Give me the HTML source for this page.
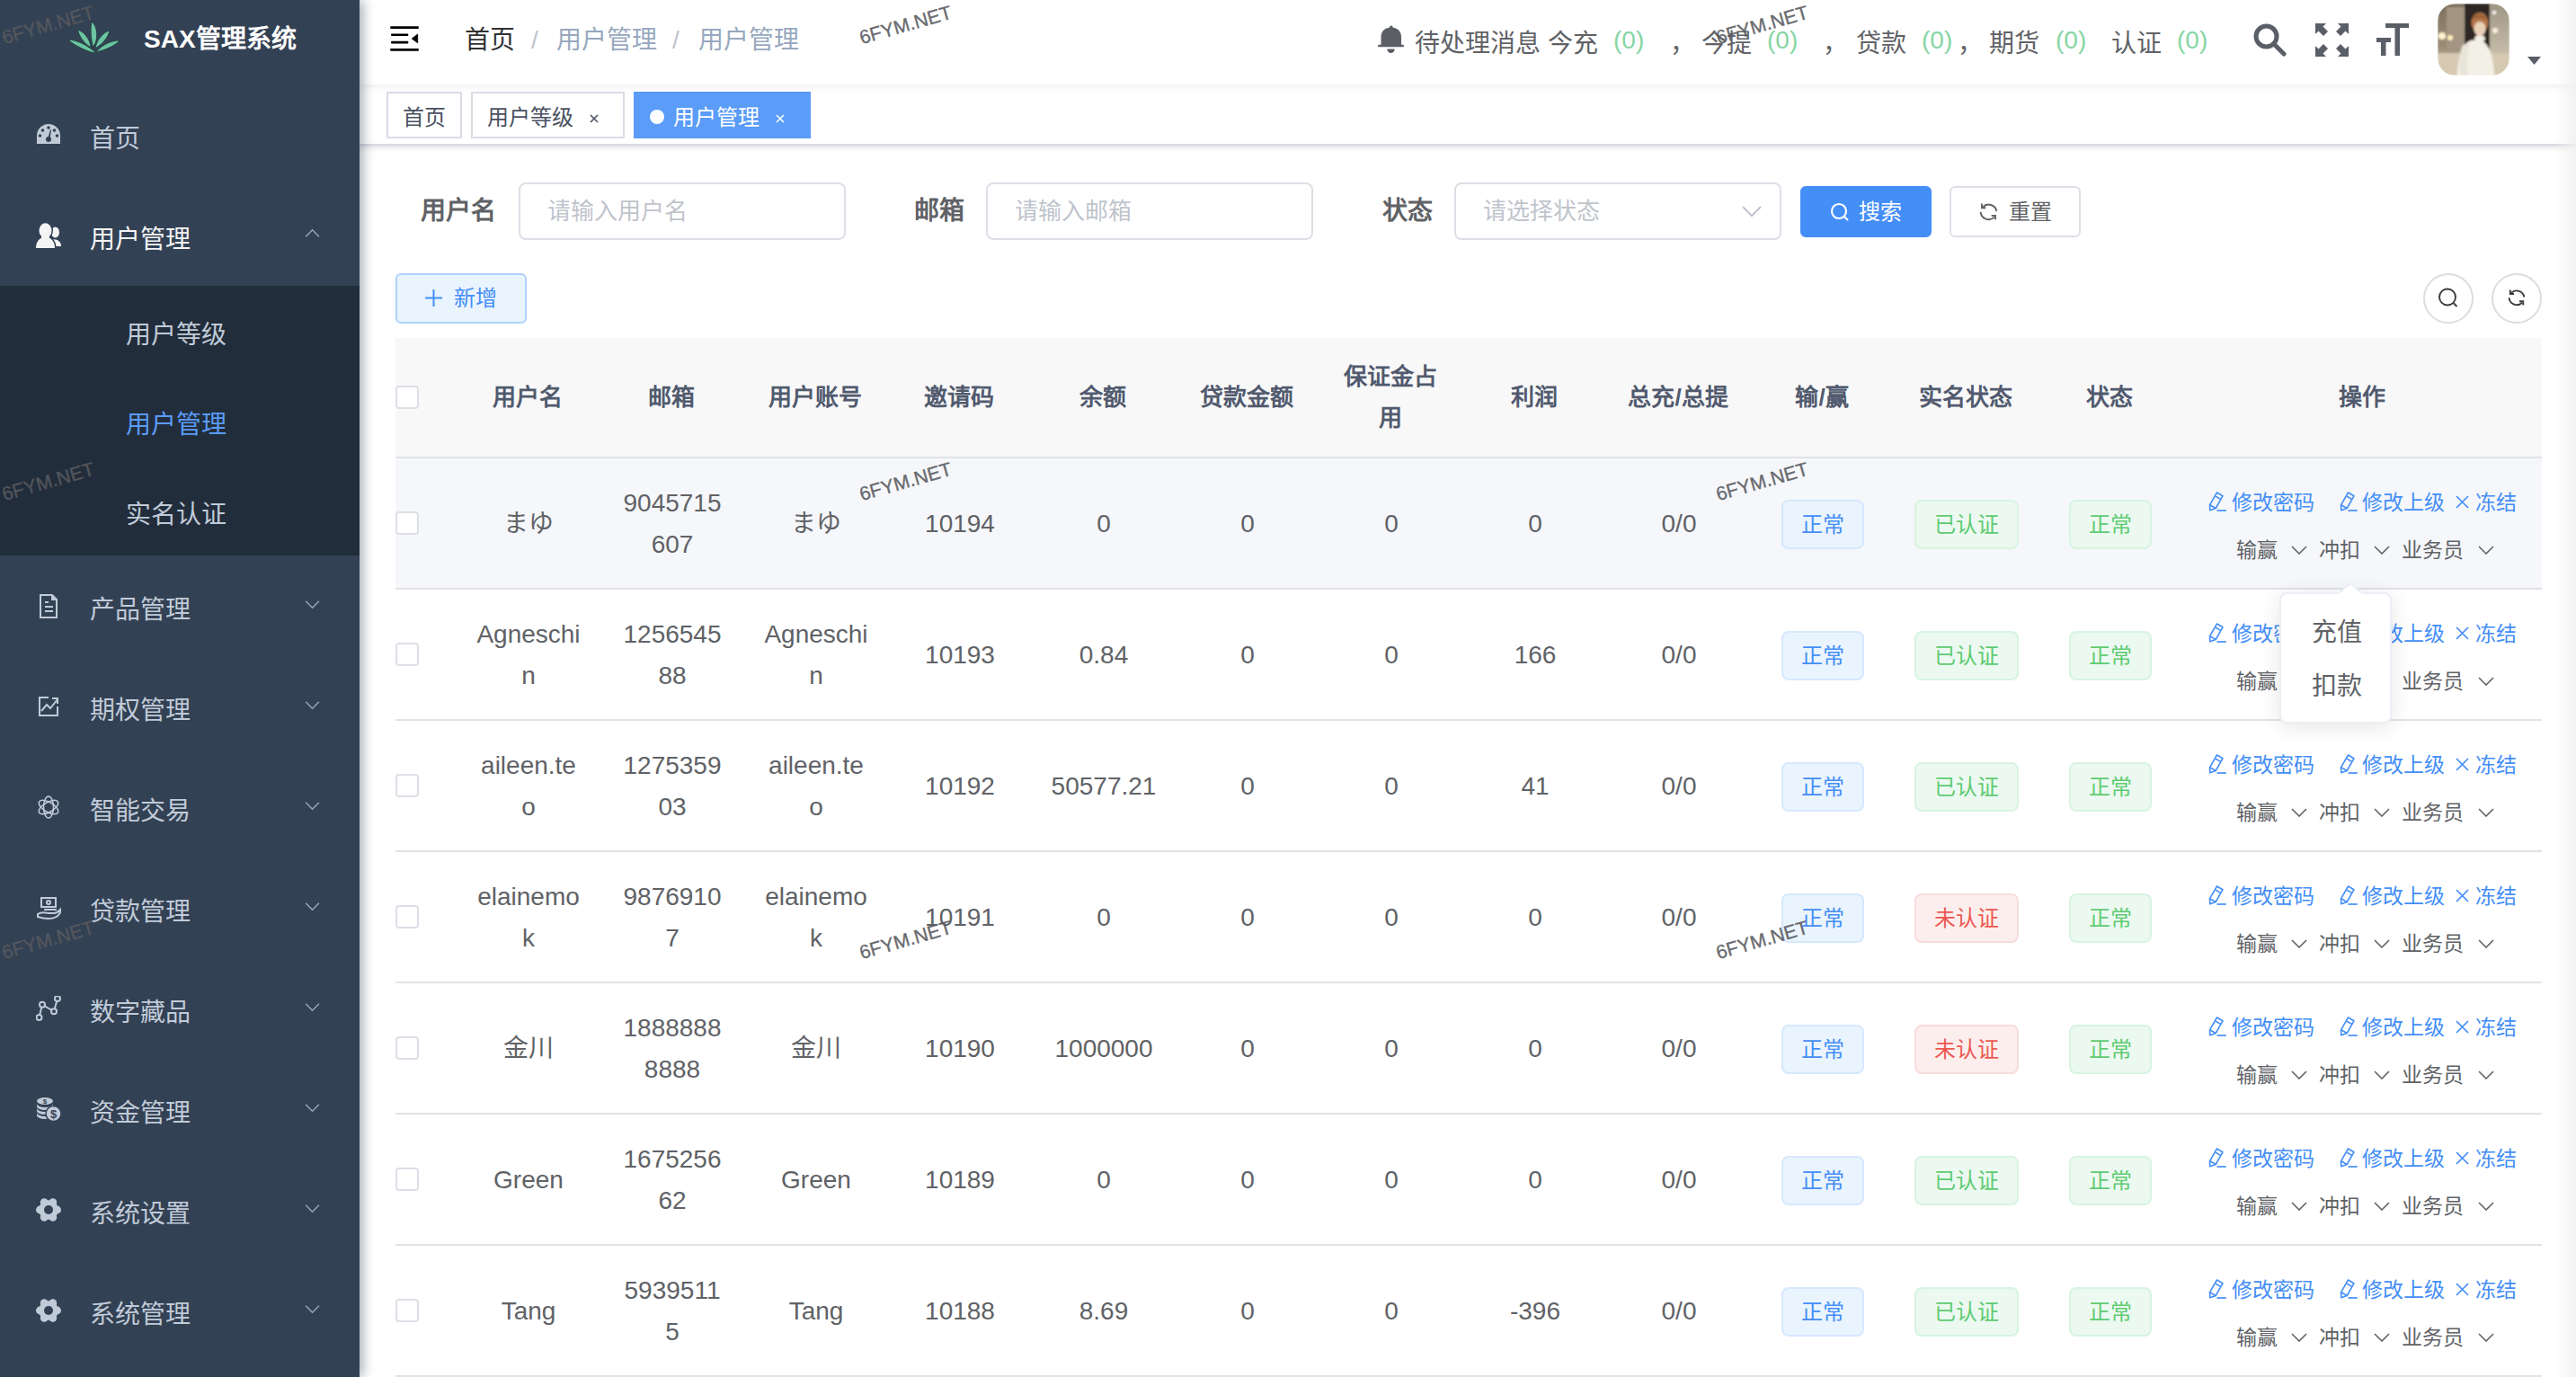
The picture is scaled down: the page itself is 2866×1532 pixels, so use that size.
<!DOCTYPE html><html lang="zh-CN"><head><meta charset="utf-8"><style>
*{box-sizing:border-box;margin:0;padding:0}
html,body{width:2866px;height:1532px;overflow:hidden;background:#fff;font-family:"Liberation Sans", sans-serif;}
.abs{position:absolute}
.t{position:absolute;white-space:nowrap;line-height:1}
#sb{position:absolute;left:0;top:0;width:400px;height:1532px;background:#334154;z-index:3;box-shadow:4px 0 12px rgba(0,21,41,.35)}
#nav{position:absolute;left:400px;top:0;width:2466px;height:94px;background:#fff;box-shadow:0 2px 8px rgba(0,21,41,.08);z-index:2}
#tags{position:absolute;left:400px;top:94px;width:2466px;height:68px;background:#fff;border-bottom:2px solid #d9dce4;box-shadow:0 2px 6px 0 rgba(0,0,0,.12),0 0 6px 0 rgba(0,0,0,.04);z-index:1}
.tag{position:absolute;top:8px;height:52px;border:2px solid #d8dce5;color:#495060;background:#fff;font-size:24px;line-height:54px;padding:0 16px}
.tag.act{background:#5a9cf8;border-color:#5a9cf8;color:#fff}
.mi{position:absolute;left:0;width:400px;height:112px;color:#c1cbd8;font-size:28px}
.mi .ic{position:absolute;left:40px;top:42px;width:28px;height:28px}
.mi .tx{position:absolute;left:100px;top:5px;line-height:112px}
.mi .ar{position:absolute;left:340px;top:50px;width:18px;height:12px}
.si{position:absolute;left:0;width:400px;height:100px;color:#c1cbd8;font-size:28px;line-height:100px;padding-left:140px;padding-top:5px}
.lbl{position:absolute;font-size:28px;font-weight:bold;color:#606266;line-height:62px;top:204px}
.inp{position:absolute;top:203px;height:64px;width:364px;border:2px solid #dcdfe6;border-radius:8px;background:#fff;color:#c0c4cc;font-size:26px;line-height:60px;padding-left:30px}
.btn{position:absolute;top:207px;height:57px;width:146px;border-radius:6px;font-size:24px;line-height:53px;text-align:center}
th,td{padding:0;text-align:center;vertical-align:middle}
#tbl{position:absolute;left:440px;top:376px;width:2388px;border-collapse:collapse;table-layout:fixed}
#tbl th{background:#f8f8f9;color:#515a6e;font-size:26px;font-weight:bold;height:133px;line-height:46px;border-bottom:2px solid #e2e3e6}
#tbl td{color:#606266;font-size:28px;height:146px;line-height:46px;border-bottom:2px solid #e2e3e6;padding:2px 0 0 2px}
#tbl tr.hv td{background:#f5f7fa}
.cb{display:block;width:26px;height:26px;border:2px solid #dcdfe6;border-radius:4px;background:#fff;margin-left:0}
.tg{display:inline-block;height:55px;line-height:51px;padding:0 20px;font-size:24px;border:2px solid;border-radius:8px;vertical-align:middle}
.tb{background:#eaf4fe;border-color:#d6e8fd;color:#448ef7}
.tgn{background:#ebf9f1;border-color:#d7f4e1;color:#5fcb71}
.tr{background:#fceeed;border-color:#f9dcdc;color:#eb5851}
.ops{position:relative;height:146px}
.wm{position:absolute;font-size:21.4px;font-weight:normal;color:rgba(88,90,94,.88);-webkit-text-stroke:0.4px rgba(88,90,94,.88);transform:rotate(-16deg);transform-origin:0 0;white-space:nowrap;z-index:20;line-height:1}
</style></head><body><div id="sb">
<svg class="abs" style="left:66px;top:16px" width="80" height="52" viewBox="0 0 80 52"><g fill="#6cc4a0" stroke="#1b3a3a" stroke-width="0.8"><path d="M37.7 36.5 C44.0 27.6 42.6 13.5 36.2 8.1 C34.3 13.9 34.9 28.1 37.7 36.5Z"/><path d="M35.0 36.5 C34.5 27.9 27.0 18.6 20.8 17.2 C21.0 23.0 27.8 32.9 35.0 36.5Z"/><path d="M40.0 37.7 C47.6 34.1 55.2 24.1 55.8 18.1 C49.3 19.4 41.1 28.9 40.0 37.7Z"/><path d="M40.8 43.4 C33.4 35.0 17.8 27.8 10.0 28.1 C15.0 33.6 30.2 41.5 40.8 43.4Z"/><path d="M41.1 41.5 C50.2 40.5 63.0 34.1 67.0 29.2 C60.2 28.2 47.1 34.0 41.1 41.5Z"/></g></svg>
<div class="t" style="left:160px;top:29px;font-size:28px;font-weight:bold;color:#fff;line-height:30px">SAX管理系统</div>
<div class="mi" style="top:94px;color:#c1cbd8"><div class="ic"><svg viewBox="0 0 28 24" width="28" height="24"><path d="M14 1 A13 13 0 0 0 1 14 V23 H27 V14 A13 13 0 0 0 14 1Z" fill="#c1cbd8"/><g fill="#334154"><circle cx="14" cy="5" r="1.8"/><circle cx="7.5" cy="8" r="1.8"/><circle cx="20.5" cy="8" r="1.8"/><circle cx="4.5" cy="14" r="1.8"/><circle cx="23.5" cy="14" r="1.8"/><circle cx="14" cy="18" r="3"/><path d="M13 18 L16 7 L17 7.5 L15.5 18Z"/></g></svg></div><div class="tx">首页</div></div>
<div class="mi" style="top:206px;color:#f4f4f5"><div class="ic"><svg viewBox="0 0 28 28" width="28" height="28"><g fill="#f4f4f5"><ellipse cx="21.5" cy="10.5" rx="4.5" ry="6"/><path d="M17 18.5 C24 17.5 28 21 28 26 H20Z"/></g><g fill="#334154" stroke="#334154" stroke-width="3"><ellipse cx="10.5" cy="8.5" rx="7" ry="8.3"/><rect x="6" y="12" width="9" height="6"/><path d="M0 28 C0 20.5 4 16 10.5 16 C17 16 21 20.5 21 28Z"/></g><g fill="#f4f4f5"><ellipse cx="10.5" cy="8.5" rx="7" ry="8.3"/><rect x="6" y="12" width="9" height="6"/><path d="M0 28 C0 20.5 4 16 10.5 16 C17 16 21 20.5 21 28Z"/></g></svg></div><div class="tx">用户管理</div><svg class="ar" style="top:47px;left:339px" viewBox="0 0 19 13" width="19" height="13"><path d="M1 11 L9 3 L17 11" stroke="#98a6bb" stroke-width="1.6" fill="none"/></svg></div>
<div class="abs" style="left:0;top:318px;width:400px;height:300px;background:#222d3c"></div>
<div class="si" style="top:318px;color:#c1cbd8">用户等级</div>
<div class="si" style="top:418px;color:#5a9cf8">用户管理</div>
<div class="si" style="top:518px;color:#c1cbd8">实名认证</div>
<div class="mi" style="top:618px"><div class="ic"><svg viewBox="0 0 28 28" width="28" height="28" fill="none" stroke="#c1cbd8" stroke-width="2"><path d="M5 2 H18 L23 7 V27 H5Z"/><path d="M18 2 V7 H23" fill="#c1cbd8"/><path d="M10 10 H14 M10 15 H19 M10 20 H19" stroke-width="2"/></svg></div><div class="tx">产品管理</div><svg class="ar" style="top:49px;left:339px" viewBox="0 0 19 13" width="19" height="13"><path d="M1 2 L9 10 L17 2" stroke="#98a6bb" stroke-width="1.6" fill="none"/></svg></div>
<div class="mi" style="top:730px"><div class="ic"><svg viewBox="0 0 28 28" width="28" height="28" fill="none" stroke="#c1cbd8" stroke-width="2"><path d="M14 4 H4 V24 H24 V14"/><path d="M6 19 L12 12 L16 16 L24 6"/><path d="M18 5 H24 V11"/></svg></div><div class="tx">期权管理</div><svg class="ar" style="top:49px;left:339px" viewBox="0 0 19 13" width="19" height="13"><path d="M1 2 L9 10 L17 2" stroke="#98a6bb" stroke-width="1.6" fill="none"/></svg></div>
<div class="mi" style="top:842px"><div class="ic"><svg viewBox="0 0 28 28" width="28" height="28" fill="none" stroke="#c1cbd8" stroke-width="1.5"><ellipse cx="14" cy="14" rx="5.5" ry="12"/><ellipse cx="14" cy="14" rx="5.5" ry="12" transform="rotate(60 14 14)"/><ellipse cx="14" cy="14" rx="5.5" ry="12" transform="rotate(-60 14 14)"/></svg></div><div class="tx">智能交易</div><svg class="ar" style="top:49px;left:339px" viewBox="0 0 19 13" width="19" height="13"><path d="M1 2 L9 10 L17 2" stroke="#98a6bb" stroke-width="1.6" fill="none"/></svg></div>
<div class="mi" style="top:954px"><div class="ic"><svg viewBox="0 0 28 28" width="28" height="28" fill="none" stroke="#c1cbd8" stroke-width="2"><path d="M6 3 H22 V13 H6Z"/><circle cx="14" cy="8" r="2"/><path d="M9 16 H23"/><path d="M2 21 C6 18 10 19 14 20 H20 C24 20 26 17 27 16 V19 C25 24 20 26 14 26 C9 26 5 25 2 24Z"/></svg></div><div class="tx">贷款管理</div><svg class="ar" style="top:49px;left:339px" viewBox="0 0 19 13" width="19" height="13"><path d="M1 2 L9 10 L17 2" stroke="#98a6bb" stroke-width="1.6" fill="none"/></svg></div>
<div class="mi" style="top:1066px"><div class="ic"><svg viewBox="0 0 28 28" width="28" height="28" fill="none" stroke="#c1cbd8" stroke-width="2"><path d="M3.5 24 L7 9.7 L20 17.3 L24 3"/><circle cx="3.5" cy="24" r="3" fill="#334154"/><circle cx="7" cy="9.7" r="3" fill="#334154"/><circle cx="20" cy="17.3" r="3" fill="#334154"/><circle cx="24" cy="3" r="3" fill="#334154"/></svg></div><div class="tx">数字藏品</div><svg class="ar" style="top:49px;left:339px" viewBox="0 0 19 13" width="19" height="13"><path d="M1 2 L9 10 L17 2" stroke="#98a6bb" stroke-width="1.6" fill="none"/></svg></div>
<div class="mi" style="top:1178px"><div class="ic"><svg viewBox="0 0 28 28" width="28" height="28"><g fill="#c1cbd8"><ellipse cx="10" cy="5" rx="9" ry="4"/><path d="M1 8 a9 4 0 0 0 18 0 v3 a9 4 0 0 1 -18 0Z"/><path d="M1 13 a9 4 0 0 0 18 0 v3 a9 4 0 0 1 -18 0Z"/><path d="M1 18 a9 4 0 0 0 18 0 v3 a9 4 0 0 1 -18 0Z"/><circle cx="19.5" cy="19" r="8.5" stroke="#334154" stroke-width="1.5"/></g><text x="19.5" y="24" font-size="13" font-weight="bold" text-anchor="middle" fill="#334154" font-family="Liberation Sans">$</text><text x="10" y="8" font-size="8" font-weight="bold" text-anchor="middle" fill="#334154" font-family="Liberation Sans">$</text></svg></div><div class="tx">资金管理</div><svg class="ar" style="top:49px;left:339px" viewBox="0 0 19 13" width="19" height="13"><path d="M1 2 L9 10 L17 2" stroke="#98a6bb" stroke-width="1.6" fill="none"/></svg></div>
<div class="mi" style="top:1290px"><div class="ic"><svg viewBox="0 0 28 28" width="28" height="28"><g fill="#c1cbd8"><circle cx="14" cy="14" r="10.8"/><circle cx="23.60" cy="14.00" r="4.4"/><circle cx="18.80" cy="22.31" r="4.4"/><circle cx="9.20" cy="22.31" r="4.4"/><circle cx="4.40" cy="14.00" r="4.4"/><circle cx="9.20" cy="5.69" r="4.4"/><circle cx="18.80" cy="5.69" r="4.4"/></g><circle cx="14" cy="14" r="5" fill="#334154"/></svg></div><div class="tx">系统设置</div><svg class="ar" style="top:49px;left:339px" viewBox="0 0 19 13" width="19" height="13"><path d="M1 2 L9 10 L17 2" stroke="#98a6bb" stroke-width="1.6" fill="none"/></svg></div>
<div class="mi" style="top:1402px"><div class="ic"><svg viewBox="0 0 28 28" width="28" height="28"><g fill="#c1cbd8"><circle cx="14" cy="14" r="10.8"/><circle cx="23.60" cy="14.00" r="4.4"/><circle cx="18.80" cy="22.31" r="4.4"/><circle cx="9.20" cy="22.31" r="4.4"/><circle cx="4.40" cy="14.00" r="4.4"/><circle cx="9.20" cy="5.69" r="4.4"/><circle cx="18.80" cy="5.69" r="4.4"/></g><circle cx="14" cy="14" r="5" fill="#334154"/></svg></div><div class="tx">系统管理</div><svg class="ar" style="top:49px;left:339px" viewBox="0 0 19 13" width="19" height="13"><path d="M1 2 L9 10 L17 2" stroke="#98a6bb" stroke-width="1.6" fill="none"/></svg></div>
</div>
<div id="nav">
<svg class="abs" style="left:34px;top:29px" width="32" height="28" viewBox="0 0 32 28"><g fill="#000"><rect x="0.2" y="0.2" width="31.6" height="2.7" rx="0.6"/><rect x="1" y="8.4" width="19.3" height="2.7" rx="1"/><rect x="1" y="16.8" width="19.3" height="2.7" rx="1"/><rect x="0.2" y="25" width="31.6" height="2.7" rx="0.6"/><path d="M24.2 14 L30.7 9 L30.7 18.8Z" stroke="#000" stroke-width="0.8" stroke-linejoin="round"/></g></svg>
<div class="t" style="left:117px;top:30px;font-size:28px;line-height:30px;color:#303133">首页</div>
<div class="t" style="left:191px;top:30px;font-size:28px;line-height:30px;color:#c0c4cc">/</div>
<div class="t" style="left:219px;top:30px;font-size:28px;line-height:30px;color:#97a8be">用户管理</div>
<div class="t" style="left:348px;top:30px;font-size:28px;line-height:30px;color:#c0c4cc">/</div>
<div class="t" style="left:377px;top:30px;font-size:28px;line-height:30px;color:#97a8be">用户管理</div>
<svg class="abs" style="left:1132px;top:28px" width="32" height="32" viewBox="0 0 32 32"><g fill="#5b5e65"><circle cx="15.8" cy="2.4" r="1.9"/><path d="M4.5 22.5 V13 C4.5 6.5 9.5 2.6 15.8 2.6 C22 2.6 27 6.5 27 13 V22.5Z"/><rect x="1" y="21.8" width="29" height="2.5" rx="1.2"/><path d="M11.3 26.6 H19.7 A4.2 4.4 0 0 1 11.3 26.6Z"/></g></svg>
<div class="t" style="left:1174px;top:34px;font-size:28px;line-height:30px;color:#606266;">待处理消息</div>
<div class="t" style="left:1322px;top:34px;font-size:28px;line-height:30px;color:#606266;">今充</div>
<div class="t" style="left:1395px;top:30px;font-size:28px;line-height:30px;color:#86d6a4;">(0)</div>
<div class="t" style="left:1458px;top:34px;font-size:28px;line-height:30px;color:#606266;">，</div>
<div class="t" style="left:1493px;top:34px;font-size:28px;line-height:30px;color:#606266;">今提</div>
<div class="t" style="left:1566px;top:30px;font-size:28px;line-height:30px;color:#86d6a4;">(0)</div>
<div class="t" style="left:1628px;top:34px;font-size:28px;line-height:30px;color:#606266;">，</div>
<div class="t" style="left:1665px;top:34px;font-size:28px;line-height:30px;color:#606266;">贷款</div>
<div class="t" style="left:1738px;top:30px;font-size:28px;line-height:30px;color:#86d6a4;">(0)</div>
<div class="t" style="left:1778px;top:34px;font-size:28px;line-height:30px;color:#606266;">，</div>
<div class="t" style="left:1813px;top:34px;font-size:28px;line-height:30px;color:#606266;">期货</div>
<div class="t" style="left:1887px;top:30px;font-size:28px;line-height:30px;color:#86d6a4;">(0)</div>
<div class="t" style="left:1949px;top:34px;font-size:28px;line-height:30px;color:#606266;">认证</div>
<div class="t" style="left:2022px;top:30px;font-size:28px;line-height:30px;color:#86d6a4;">(0)</div>
<svg class="abs" style="left:2107px;top:26px" width="37" height="37" viewBox="0 0 37 37"><circle cx="14.5" cy="14.5" r="11.5" stroke="#5a5e66" stroke-width="5" fill="none"/><path d="M23 23 L34 34" stroke="#5a5e66" stroke-width="5" stroke-linecap="round"/></svg>
<svg class="abs" style="left:2176px;top:26px" width="37" height="37" viewBox="0 0 37 37"><g fill="#5a5e66"><path d="M0 0 H12 L8.5 3.5 L14 9 L9 14 L3.5 8.5 L0 12Z"/><path d="M37 0 H25 L28.5 3.5 L23 9 L28 14 L33.5 8.5 L37 12Z"/><path d="M0 37 H12 L8.5 33.5 L14 28 L9 23 L3.5 28.5 L0 25Z"/><path d="M37 37 H25 L28.5 33.5 L23 28 L28 23 L33.5 28.5 L37 25Z"/></g></svg>
<svg class="abs" style="left:2244px;top:26px" width="37" height="37" viewBox="0 0 37 37"><g fill="#5a5e66"><rect x="10" y="0" width="26" height="5"/><rect x="20.5" y="0" width="5.5" height="36"/><rect x="0" y="16" width="16" height="5"/><rect x="5" y="16" width="5.5" height="20"/></g></svg>
<svg class="abs" style="left:2312px;top:4px" width="80" height="80" viewBox="0 0 80 80"><defs><clipPath id="av"><rect width="80" height="80" rx="20"/></clipPath>
<linearGradient id="avL" x1="0" y1="0" x2="0" y2="1"><stop offset="0" stop-color="#7d7060"/><stop offset=".6" stop-color="#9b8c76"/><stop offset="1" stop-color="#d9ccb6"/></linearGradient>
<linearGradient id="avR" x1="0" y1="0" x2="0" y2="1"><stop offset="0" stop-color="#a09684"/><stop offset="1" stop-color="#cfc5b2"/></linearGradient>
<filter id="avb"><feGaussianBlur stdDeviation="1.2"/></filter></defs>
<g clip-path="url(#av)"><g filter="url(#avb)"><rect width="80" height="80" fill="url(#avL)"/>
<rect x="10" y="4" width="20" height="50" fill="#a39582"/><rect x="30" y="0" width="30" height="50" fill="#2e2722"/><rect x="58" y="0" width="22" height="70" fill="url(#avR)"/>
<circle cx="63" cy="10" r="2" fill="#fff"/><circle cx="5" cy="36" r="4" fill="#fff4d0"/><circle cx="14" cy="38" r="3" fill="#ffeebb"/><circle cx="64" cy="30" r="3" fill="#f7f0dc"/>
<rect x="0" y="55" width="80" height="25" fill="#d6c9b2"/>
<path d="M22 80 C22 58 28 44 37 41 L46 40 C56 42 62 56 63 80Z" fill="#f3f0e6"/>
<path d="M28 46 C22 60 24 72 26 80 L34 80 C32 66 34 54 36 44Z" fill="#e8e4d8"/>
<ellipse cx="47" cy="21" rx="9.5" ry="11" fill="#b27648"/><ellipse cx="47" cy="28" rx="6.5" ry="8" fill="#ead0b8"/><path d="M38 18 C40 10 54 10 56 19 C52 15 44 15 38 18Z" fill="#9a5f36"/>
<ellipse cx="47" cy="39" rx="6" ry="4" fill="#f4efe4"/>
</g></g></svg>
<svg class="abs" style="left:2412px;top:63px" width="15" height="9" viewBox="0 0 15 9"><path d="M0 0 H15 L7.5 9Z" fill="#5a5e66"/></svg>
</div>
<div id="tags">
<div class="tag" style="left:30px;width:84px">首页</div>
<div class="tag" style="left:124px;width:171px">用户等级<svg class="abs" style="left:130px;top:23px" width="10" height="10" viewBox="0 0 10 10"><path d="M1 1 L9 9 M9 1 L1 9" stroke="#495060" stroke-width="1.6"/></svg></div>
<div class="tag act" style="left:305px;width:197px"><span style="display:inline-block;width:16px;height:16px;border-radius:50%;background:#fff;vertical-align:middle;position:relative;top:-3px;margin-right:10px"></span>用户管理<svg class="abs" style="left:156px;top:23px" width="10" height="10" viewBox="0 0 10 10"><path d="M1 1 L9 9 M9 1 L1 9" stroke="#fff" stroke-width="1.6"/></svg></div>
</div>
<div class="lbl" style="left:468px">用户名</div>
<div class="inp" style="left:577px">请输入用户名</div>
<div class="lbl" style="left:1017px">邮箱</div>
<div class="inp" style="left:1097px">请输入邮箱</div>
<div class="lbl" style="left:1538px">状态</div>
<div class="inp" style="left:1618px">请选择状态<svg class="abs" style="left:318px;top:24px" width="22" height="13" viewBox="0 0 22 13"><path d="M1 1 L11 11 L21 1" stroke="#c0c4cc" stroke-width="2" fill="none"/></svg></div>
<div class="btn" style="left:2003px;background:#448ef7;color:#fff;border:2px solid #448ef7"><svg style="vertical-align:middle;position:relative;top:-2px;margin-right:10px" width="22" height="22" viewBox="0 0 22 22"><circle cx="10" cy="10" r="8" stroke="#fff" stroke-width="2.2" fill="none"/><path d="M15.5 15.5 L20 20" stroke="#fff" stroke-width="2.2"/></svg>搜索</div>
<div class="btn" style="left:2169px;background:#fff;color:#606266;border:2px solid #dcdfe6"><svg style="vertical-align:middle;position:relative;top:-2px;margin-right:12px" width="21" height="21" viewBox="5 5 20 20" fill="none" stroke="#606266" stroke-width="1.8"><path d="M8.8 10.2 A8.5 8.5 0 0 1 23.4 14.5"/><path d="M7.8 6.5 V11 H12"/><path d="M6.6 15.3 A8.5 8.5 0 0 0 21 20.8"/><path d="M18 19.2 H22.2 V23.4"/></svg>重置</div>
<div class="btn" style="left:440px;top:304px;width:146px;height:56px;background:#eaf4fe;color:#448ef7;border:2px solid #add2fb;line-height:52px"><svg style="vertical-align:middle;position:relative;top:-2px;margin-right:13px" width="19" height="19" viewBox="0 0 19 19"><path d="M9.5 0 V19 M0 9.5 H19" stroke="#448ef7" stroke-width="2"/></svg>新增</div>
<div class="abs" style="left:2696px;top:304px;width:56px;height:56px;border:2px solid #dcdde0;border-radius:50%"><svg class="abs" style="left:14px;top:13px" width="26" height="26" viewBox="0 0 26 26"><circle cx="11" cy="11.5" r="9" stroke="#3a3b3d" stroke-width="1.9" fill="none"/><path d="M17.5 18 L21.5 22" stroke="#3a3b3d" stroke-width="1.9"/></svg></div>
<div class="abs" style="left:2772px;top:304px;width:56px;height:56px;border:2px solid #dcdde0;border-radius:50%"><svg class="abs" style="left:11px;top:10px" width="30" height="30" viewBox="0 0 30 30" fill="none" stroke="#3a3b3d" stroke-width="1.9"><path d="M8.8 10.2 A8.5 8.5 0 0 1 23.4 14.5"/><path d="M7.8 6.5 V11 H12"/><path d="M6.6 15.3 A8.5 8.5 0 0 0 21 20.8"/><path d="M18 19.2 H22.2 V23.4"/></svg></div>
<table id="tbl"><colgroup><col style="width:67px"><col style="width:160px"><col style="width:160px"><col style="width:160px"><col style="width:160px"><col style="width:160px"><col style="width:160px"><col style="width:160px"><col style="width:160px"><col style="width:160px"><col style="width:160px"><col style="width:160px"><col style="width:160px"><col style="width:401px"></colgroup>
<tr><th><span class=cb></span></th><th>用户名</th><th>邮箱</th><th>用户账号</th><th>邀请码</th><th>余额</th><th>贷款金额</th><th>保证金占<br>用</th><th>利润</th><th>总充/总提</th><th>输/赢</th><th>实名状态</th><th>状态</th><th>操作</th></tr>
<tr class="hv"><td style="text-align:left;padding:0"><span class="cb"></span></td><td>まゆ</td><td>9045715<br>607</td><td>まゆ</td><td>10194</td><td>0</td><td>0</td><td>0</td><td>0</td><td>0/0</td><td><span class="tg tb">正常</span></td><td><span class="tg tgn">已认证</span></td><td><span class="tg tgn">正常</span></td><td style="text-align:left;vertical-align:top;padding:0"><div style="position:relative;width:401px;height:144px"><svg style="position:absolute;left:30px;top:37px" width="22" height="23" viewBox="0 0 22 23" fill="none" stroke="#448ef7" stroke-width="1.6" stroke-linejoin="round"><path d="M9.5 1 L15.9 4.8 L8.2 18.5 L1.8 20.8 L1.5 14.8Z"/><path d="M8.2 5.2 L13.7 8.4"/><path d="M1.6 14.8 L8.2 18.5"/><path d="M9.5 21 H19.8" stroke-width="1.7"/></svg><div style="position:absolute;left:56px;top:37px;font-size:24px;line-height:24px;color:#448ef7;white-space:nowrap;font-size:23px">修改密码</div><svg style="position:absolute;left:176px;top:37px" width="22" height="23" viewBox="0 0 22 23" fill="none" stroke="#448ef7" stroke-width="1.6" stroke-linejoin="round"><path d="M9.5 1 L15.9 4.8 L8.2 18.5 L1.8 20.8 L1.5 14.8Z"/><path d="M8.2 5.2 L13.7 8.4"/><path d="M1.6 14.8 L8.2 18.5"/><path d="M9.5 21 H19.8" stroke-width="1.7"/></svg><div style="position:absolute;left:201px;top:37px;font-size:24px;line-height:24px;color:#448ef7;white-space:nowrap;font-size:23px">修改上级</div><svg style="position:absolute;left:305px;top:41px" width="15" height="15" viewBox="0 0 15 15" fill="none" stroke="#448ef7" stroke-width="1.7"><path d="M1 1 L14 14 M14 1 L1 14"/></svg><div style="position:absolute;left:327px;top:37px;font-size:24px;line-height:24px;color:#448ef7;white-space:nowrap;font-size:23px">冻结</div><div style="position:absolute;left:61px;top:90px;font-size:24px;line-height:24px;color:#606266;white-space:nowrap;font-size:23px">输赢</div><svg style="position:absolute;left:122px;top:97px" width="18" height="10" viewBox="0 0 18 10" fill="none" stroke="#606266" stroke-width="1.6"><path d="M1 1 L9 9 L17 1"/></svg><div style="position:absolute;left:153px;top:90px;font-size:24px;line-height:24px;color:#606266;white-space:nowrap;font-size:23px">冲扣</div><svg style="position:absolute;left:214px;top:97px" width="18" height="10" viewBox="0 0 18 10" fill="none" stroke="#606266" stroke-width="1.6"><path d="M1 1 L9 9 L17 1"/></svg><div style="position:absolute;left:245px;top:90px;font-size:24px;line-height:24px;color:#606266;white-space:nowrap;font-size:23px">业务员</div><svg style="position:absolute;left:330px;top:97px" width="18" height="10" viewBox="0 0 18 10" fill="none" stroke="#606266" stroke-width="1.6"><path d="M1 1 L9 9 L17 1"/></svg></div></td></tr>
<tr><td style="text-align:left;padding:0"><span class="cb"></span></td><td>Agneschi<br>n</td><td>1256545<br>88</td><td>Agneschi<br>n</td><td>10193</td><td>0.84</td><td>0</td><td>0</td><td>166</td><td>0/0</td><td><span class="tg tb">正常</span></td><td><span class="tg tgn">已认证</span></td><td><span class="tg tgn">正常</span></td><td style="text-align:left;vertical-align:top;padding:0"><div style="position:relative;width:401px;height:144px"><svg style="position:absolute;left:30px;top:37px" width="22" height="23" viewBox="0 0 22 23" fill="none" stroke="#448ef7" stroke-width="1.6" stroke-linejoin="round"><path d="M9.5 1 L15.9 4.8 L8.2 18.5 L1.8 20.8 L1.5 14.8Z"/><path d="M8.2 5.2 L13.7 8.4"/><path d="M1.6 14.8 L8.2 18.5"/><path d="M9.5 21 H19.8" stroke-width="1.7"/></svg><div style="position:absolute;left:56px;top:37px;font-size:24px;line-height:24px;color:#448ef7;white-space:nowrap;font-size:23px">修改密码</div><svg style="position:absolute;left:176px;top:37px" width="22" height="23" viewBox="0 0 22 23" fill="none" stroke="#448ef7" stroke-width="1.6" stroke-linejoin="round"><path d="M9.5 1 L15.9 4.8 L8.2 18.5 L1.8 20.8 L1.5 14.8Z"/><path d="M8.2 5.2 L13.7 8.4"/><path d="M1.6 14.8 L8.2 18.5"/><path d="M9.5 21 H19.8" stroke-width="1.7"/></svg><div style="position:absolute;left:201px;top:37px;font-size:24px;line-height:24px;color:#448ef7;white-space:nowrap;font-size:23px">修改上级</div><svg style="position:absolute;left:305px;top:41px" width="15" height="15" viewBox="0 0 15 15" fill="none" stroke="#448ef7" stroke-width="1.7"><path d="M1 1 L14 14 M14 1 L1 14"/></svg><div style="position:absolute;left:327px;top:37px;font-size:24px;line-height:24px;color:#448ef7;white-space:nowrap;font-size:23px">冻结</div><div style="position:absolute;left:61px;top:90px;font-size:24px;line-height:24px;color:#606266;white-space:nowrap;font-size:23px">输赢</div><svg style="position:absolute;left:122px;top:97px" width="18" height="10" viewBox="0 0 18 10" fill="none" stroke="#606266" stroke-width="1.6"><path d="M1 1 L9 9 L17 1"/></svg><div style="position:absolute;left:153px;top:90px;font-size:24px;line-height:24px;color:#606266;white-space:nowrap;font-size:23px">冲扣</div><svg style="position:absolute;left:214px;top:97px" width="18" height="10" viewBox="0 0 18 10" fill="none" stroke="#606266" stroke-width="1.6"><path d="M1 1 L9 9 L17 1"/></svg><div style="position:absolute;left:245px;top:90px;font-size:24px;line-height:24px;color:#606266;white-space:nowrap;font-size:23px">业务员</div><svg style="position:absolute;left:330px;top:97px" width="18" height="10" viewBox="0 0 18 10" fill="none" stroke="#606266" stroke-width="1.6"><path d="M1 1 L9 9 L17 1"/></svg></div></td></tr>
<tr><td style="text-align:left;padding:0"><span class="cb"></span></td><td>aileen.te<br>o</td><td>1275359<br>03</td><td>aileen.te<br>o</td><td>10192</td><td>50577.21</td><td>0</td><td>0</td><td>41</td><td>0/0</td><td><span class="tg tb">正常</span></td><td><span class="tg tgn">已认证</span></td><td><span class="tg tgn">正常</span></td><td style="text-align:left;vertical-align:top;padding:0"><div style="position:relative;width:401px;height:144px"><svg style="position:absolute;left:30px;top:37px" width="22" height="23" viewBox="0 0 22 23" fill="none" stroke="#448ef7" stroke-width="1.6" stroke-linejoin="round"><path d="M9.5 1 L15.9 4.8 L8.2 18.5 L1.8 20.8 L1.5 14.8Z"/><path d="M8.2 5.2 L13.7 8.4"/><path d="M1.6 14.8 L8.2 18.5"/><path d="M9.5 21 H19.8" stroke-width="1.7"/></svg><div style="position:absolute;left:56px;top:37px;font-size:24px;line-height:24px;color:#448ef7;white-space:nowrap;font-size:23px">修改密码</div><svg style="position:absolute;left:176px;top:37px" width="22" height="23" viewBox="0 0 22 23" fill="none" stroke="#448ef7" stroke-width="1.6" stroke-linejoin="round"><path d="M9.5 1 L15.9 4.8 L8.2 18.5 L1.8 20.8 L1.5 14.8Z"/><path d="M8.2 5.2 L13.7 8.4"/><path d="M1.6 14.8 L8.2 18.5"/><path d="M9.5 21 H19.8" stroke-width="1.7"/></svg><div style="position:absolute;left:201px;top:37px;font-size:24px;line-height:24px;color:#448ef7;white-space:nowrap;font-size:23px">修改上级</div><svg style="position:absolute;left:305px;top:41px" width="15" height="15" viewBox="0 0 15 15" fill="none" stroke="#448ef7" stroke-width="1.7"><path d="M1 1 L14 14 M14 1 L1 14"/></svg><div style="position:absolute;left:327px;top:37px;font-size:24px;line-height:24px;color:#448ef7;white-space:nowrap;font-size:23px">冻结</div><div style="position:absolute;left:61px;top:90px;font-size:24px;line-height:24px;color:#606266;white-space:nowrap;font-size:23px">输赢</div><svg style="position:absolute;left:122px;top:97px" width="18" height="10" viewBox="0 0 18 10" fill="none" stroke="#606266" stroke-width="1.6"><path d="M1 1 L9 9 L17 1"/></svg><div style="position:absolute;left:153px;top:90px;font-size:24px;line-height:24px;color:#606266;white-space:nowrap;font-size:23px">冲扣</div><svg style="position:absolute;left:214px;top:97px" width="18" height="10" viewBox="0 0 18 10" fill="none" stroke="#606266" stroke-width="1.6"><path d="M1 1 L9 9 L17 1"/></svg><div style="position:absolute;left:245px;top:90px;font-size:24px;line-height:24px;color:#606266;white-space:nowrap;font-size:23px">业务员</div><svg style="position:absolute;left:330px;top:97px" width="18" height="10" viewBox="0 0 18 10" fill="none" stroke="#606266" stroke-width="1.6"><path d="M1 1 L9 9 L17 1"/></svg></div></td></tr>
<tr><td style="text-align:left;padding:0"><span class="cb"></span></td><td>elainemo<br>k</td><td>9876910<br>7</td><td>elainemo<br>k</td><td>10191</td><td>0</td><td>0</td><td>0</td><td>0</td><td>0/0</td><td><span class="tg tb">正常</span></td><td><span class="tg tr">未认证</span></td><td><span class="tg tgn">正常</span></td><td style="text-align:left;vertical-align:top;padding:0"><div style="position:relative;width:401px;height:144px"><svg style="position:absolute;left:30px;top:37px" width="22" height="23" viewBox="0 0 22 23" fill="none" stroke="#448ef7" stroke-width="1.6" stroke-linejoin="round"><path d="M9.5 1 L15.9 4.8 L8.2 18.5 L1.8 20.8 L1.5 14.8Z"/><path d="M8.2 5.2 L13.7 8.4"/><path d="M1.6 14.8 L8.2 18.5"/><path d="M9.5 21 H19.8" stroke-width="1.7"/></svg><div style="position:absolute;left:56px;top:37px;font-size:24px;line-height:24px;color:#448ef7;white-space:nowrap;font-size:23px">修改密码</div><svg style="position:absolute;left:176px;top:37px" width="22" height="23" viewBox="0 0 22 23" fill="none" stroke="#448ef7" stroke-width="1.6" stroke-linejoin="round"><path d="M9.5 1 L15.9 4.8 L8.2 18.5 L1.8 20.8 L1.5 14.8Z"/><path d="M8.2 5.2 L13.7 8.4"/><path d="M1.6 14.8 L8.2 18.5"/><path d="M9.5 21 H19.8" stroke-width="1.7"/></svg><div style="position:absolute;left:201px;top:37px;font-size:24px;line-height:24px;color:#448ef7;white-space:nowrap;font-size:23px">修改上级</div><svg style="position:absolute;left:305px;top:41px" width="15" height="15" viewBox="0 0 15 15" fill="none" stroke="#448ef7" stroke-width="1.7"><path d="M1 1 L14 14 M14 1 L1 14"/></svg><div style="position:absolute;left:327px;top:37px;font-size:24px;line-height:24px;color:#448ef7;white-space:nowrap;font-size:23px">冻结</div><div style="position:absolute;left:61px;top:90px;font-size:24px;line-height:24px;color:#606266;white-space:nowrap;font-size:23px">输赢</div><svg style="position:absolute;left:122px;top:97px" width="18" height="10" viewBox="0 0 18 10" fill="none" stroke="#606266" stroke-width="1.6"><path d="M1 1 L9 9 L17 1"/></svg><div style="position:absolute;left:153px;top:90px;font-size:24px;line-height:24px;color:#606266;white-space:nowrap;font-size:23px">冲扣</div><svg style="position:absolute;left:214px;top:97px" width="18" height="10" viewBox="0 0 18 10" fill="none" stroke="#606266" stroke-width="1.6"><path d="M1 1 L9 9 L17 1"/></svg><div style="position:absolute;left:245px;top:90px;font-size:24px;line-height:24px;color:#606266;white-space:nowrap;font-size:23px">业务员</div><svg style="position:absolute;left:330px;top:97px" width="18" height="10" viewBox="0 0 18 10" fill="none" stroke="#606266" stroke-width="1.6"><path d="M1 1 L9 9 L17 1"/></svg></div></td></tr>
<tr><td style="text-align:left;padding:0"><span class="cb"></span></td><td>金川</td><td>1888888<br>8888</td><td>金川</td><td>10190</td><td>1000000</td><td>0</td><td>0</td><td>0</td><td>0/0</td><td><span class="tg tb">正常</span></td><td><span class="tg tr">未认证</span></td><td><span class="tg tgn">正常</span></td><td style="text-align:left;vertical-align:top;padding:0"><div style="position:relative;width:401px;height:144px"><svg style="position:absolute;left:30px;top:37px" width="22" height="23" viewBox="0 0 22 23" fill="none" stroke="#448ef7" stroke-width="1.6" stroke-linejoin="round"><path d="M9.5 1 L15.9 4.8 L8.2 18.5 L1.8 20.8 L1.5 14.8Z"/><path d="M8.2 5.2 L13.7 8.4"/><path d="M1.6 14.8 L8.2 18.5"/><path d="M9.5 21 H19.8" stroke-width="1.7"/></svg><div style="position:absolute;left:56px;top:37px;font-size:24px;line-height:24px;color:#448ef7;white-space:nowrap;font-size:23px">修改密码</div><svg style="position:absolute;left:176px;top:37px" width="22" height="23" viewBox="0 0 22 23" fill="none" stroke="#448ef7" stroke-width="1.6" stroke-linejoin="round"><path d="M9.5 1 L15.9 4.8 L8.2 18.5 L1.8 20.8 L1.5 14.8Z"/><path d="M8.2 5.2 L13.7 8.4"/><path d="M1.6 14.8 L8.2 18.5"/><path d="M9.5 21 H19.8" stroke-width="1.7"/></svg><div style="position:absolute;left:201px;top:37px;font-size:24px;line-height:24px;color:#448ef7;white-space:nowrap;font-size:23px">修改上级</div><svg style="position:absolute;left:305px;top:41px" width="15" height="15" viewBox="0 0 15 15" fill="none" stroke="#448ef7" stroke-width="1.7"><path d="M1 1 L14 14 M14 1 L1 14"/></svg><div style="position:absolute;left:327px;top:37px;font-size:24px;line-height:24px;color:#448ef7;white-space:nowrap;font-size:23px">冻结</div><div style="position:absolute;left:61px;top:90px;font-size:24px;line-height:24px;color:#606266;white-space:nowrap;font-size:23px">输赢</div><svg style="position:absolute;left:122px;top:97px" width="18" height="10" viewBox="0 0 18 10" fill="none" stroke="#606266" stroke-width="1.6"><path d="M1 1 L9 9 L17 1"/></svg><div style="position:absolute;left:153px;top:90px;font-size:24px;line-height:24px;color:#606266;white-space:nowrap;font-size:23px">冲扣</div><svg style="position:absolute;left:214px;top:97px" width="18" height="10" viewBox="0 0 18 10" fill="none" stroke="#606266" stroke-width="1.6"><path d="M1 1 L9 9 L17 1"/></svg><div style="position:absolute;left:245px;top:90px;font-size:24px;line-height:24px;color:#606266;white-space:nowrap;font-size:23px">业务员</div><svg style="position:absolute;left:330px;top:97px" width="18" height="10" viewBox="0 0 18 10" fill="none" stroke="#606266" stroke-width="1.6"><path d="M1 1 L9 9 L17 1"/></svg></div></td></tr>
<tr><td style="text-align:left;padding:0"><span class="cb"></span></td><td>Green</td><td>1675256<br>62</td><td>Green</td><td>10189</td><td>0</td><td>0</td><td>0</td><td>0</td><td>0/0</td><td><span class="tg tb">正常</span></td><td><span class="tg tgn">已认证</span></td><td><span class="tg tgn">正常</span></td><td style="text-align:left;vertical-align:top;padding:0"><div style="position:relative;width:401px;height:144px"><svg style="position:absolute;left:30px;top:37px" width="22" height="23" viewBox="0 0 22 23" fill="none" stroke="#448ef7" stroke-width="1.6" stroke-linejoin="round"><path d="M9.5 1 L15.9 4.8 L8.2 18.5 L1.8 20.8 L1.5 14.8Z"/><path d="M8.2 5.2 L13.7 8.4"/><path d="M1.6 14.8 L8.2 18.5"/><path d="M9.5 21 H19.8" stroke-width="1.7"/></svg><div style="position:absolute;left:56px;top:37px;font-size:24px;line-height:24px;color:#448ef7;white-space:nowrap;font-size:23px">修改密码</div><svg style="position:absolute;left:176px;top:37px" width="22" height="23" viewBox="0 0 22 23" fill="none" stroke="#448ef7" stroke-width="1.6" stroke-linejoin="round"><path d="M9.5 1 L15.9 4.8 L8.2 18.5 L1.8 20.8 L1.5 14.8Z"/><path d="M8.2 5.2 L13.7 8.4"/><path d="M1.6 14.8 L8.2 18.5"/><path d="M9.5 21 H19.8" stroke-width="1.7"/></svg><div style="position:absolute;left:201px;top:37px;font-size:24px;line-height:24px;color:#448ef7;white-space:nowrap;font-size:23px">修改上级</div><svg style="position:absolute;left:305px;top:41px" width="15" height="15" viewBox="0 0 15 15" fill="none" stroke="#448ef7" stroke-width="1.7"><path d="M1 1 L14 14 M14 1 L1 14"/></svg><div style="position:absolute;left:327px;top:37px;font-size:24px;line-height:24px;color:#448ef7;white-space:nowrap;font-size:23px">冻结</div><div style="position:absolute;left:61px;top:90px;font-size:24px;line-height:24px;color:#606266;white-space:nowrap;font-size:23px">输赢</div><svg style="position:absolute;left:122px;top:97px" width="18" height="10" viewBox="0 0 18 10" fill="none" stroke="#606266" stroke-width="1.6"><path d="M1 1 L9 9 L17 1"/></svg><div style="position:absolute;left:153px;top:90px;font-size:24px;line-height:24px;color:#606266;white-space:nowrap;font-size:23px">冲扣</div><svg style="position:absolute;left:214px;top:97px" width="18" height="10" viewBox="0 0 18 10" fill="none" stroke="#606266" stroke-width="1.6"><path d="M1 1 L9 9 L17 1"/></svg><div style="position:absolute;left:245px;top:90px;font-size:24px;line-height:24px;color:#606266;white-space:nowrap;font-size:23px">业务员</div><svg style="position:absolute;left:330px;top:97px" width="18" height="10" viewBox="0 0 18 10" fill="none" stroke="#606266" stroke-width="1.6"><path d="M1 1 L9 9 L17 1"/></svg></div></td></tr>
<tr><td style="text-align:left;padding:0"><span class="cb"></span></td><td>Tang</td><td>5939511<br>5</td><td>Tang</td><td>10188</td><td>8.69</td><td>0</td><td>0</td><td>-396</td><td>0/0</td><td><span class="tg tb">正常</span></td><td><span class="tg tgn">已认证</span></td><td><span class="tg tgn">正常</span></td><td style="text-align:left;vertical-align:top;padding:0"><div style="position:relative;width:401px;height:144px"><svg style="position:absolute;left:30px;top:37px" width="22" height="23" viewBox="0 0 22 23" fill="none" stroke="#448ef7" stroke-width="1.6" stroke-linejoin="round"><path d="M9.5 1 L15.9 4.8 L8.2 18.5 L1.8 20.8 L1.5 14.8Z"/><path d="M8.2 5.2 L13.7 8.4"/><path d="M1.6 14.8 L8.2 18.5"/><path d="M9.5 21 H19.8" stroke-width="1.7"/></svg><div style="position:absolute;left:56px;top:37px;font-size:24px;line-height:24px;color:#448ef7;white-space:nowrap;font-size:23px">修改密码</div><svg style="position:absolute;left:176px;top:37px" width="22" height="23" viewBox="0 0 22 23" fill="none" stroke="#448ef7" stroke-width="1.6" stroke-linejoin="round"><path d="M9.5 1 L15.9 4.8 L8.2 18.5 L1.8 20.8 L1.5 14.8Z"/><path d="M8.2 5.2 L13.7 8.4"/><path d="M1.6 14.8 L8.2 18.5"/><path d="M9.5 21 H19.8" stroke-width="1.7"/></svg><div style="position:absolute;left:201px;top:37px;font-size:24px;line-height:24px;color:#448ef7;white-space:nowrap;font-size:23px">修改上级</div><svg style="position:absolute;left:305px;top:41px" width="15" height="15" viewBox="0 0 15 15" fill="none" stroke="#448ef7" stroke-width="1.7"><path d="M1 1 L14 14 M14 1 L1 14"/></svg><div style="position:absolute;left:327px;top:37px;font-size:24px;line-height:24px;color:#448ef7;white-space:nowrap;font-size:23px">冻结</div><div style="position:absolute;left:61px;top:90px;font-size:24px;line-height:24px;color:#606266;white-space:nowrap;font-size:23px">输赢</div><svg style="position:absolute;left:122px;top:97px" width="18" height="10" viewBox="0 0 18 10" fill="none" stroke="#606266" stroke-width="1.6"><path d="M1 1 L9 9 L17 1"/></svg><div style="position:absolute;left:153px;top:90px;font-size:24px;line-height:24px;color:#606266;white-space:nowrap;font-size:23px">冲扣</div><svg style="position:absolute;left:214px;top:97px" width="18" height="10" viewBox="0 0 18 10" fill="none" stroke="#606266" stroke-width="1.6"><path d="M1 1 L9 9 L17 1"/></svg><div style="position:absolute;left:245px;top:90px;font-size:24px;line-height:24px;color:#606266;white-space:nowrap;font-size:23px">业务员</div><svg style="position:absolute;left:330px;top:97px" width="18" height="10" viewBox="0 0 18 10" fill="none" stroke="#606266" stroke-width="1.6"><path d="M1 1 L9 9 L17 1"/></svg></div></td></tr>
</table>
<div class="abs" style="left:2536px;top:659px;width:125px;height:146px;background:#fff;border:2px solid #ebeef5;border-radius:8px;box-shadow:0 4px 24px rgba(0,0,0,.1);z-index:10">
<div class="t" style="left:34px;top:28px;font-size:28px;line-height:30px;color:#606266">充值</div>
<div class="t" style="left:34px;top:88px;font-size:28px;line-height:30px;color:#606266">扣款</div></div>
<svg class="abs" style="left:2601px;top:648px;z-index:11" width="28" height="14" viewBox="0 0 28 14"><path d="M0 13 L14 1 L28 13Z" fill="#fff" stroke="#ebeef5" stroke-width="2"/><rect x="0" y="12" width="28" height="3" fill="#fff"/></svg>
<div class="abs" style="left:2844px;top:0;width:22px;height:1532px;background:linear-gradient(to right,rgba(240,240,242,0),rgba(240,240,242,.9));z-index:4"></div>
<div class="wm" style="left:0px;top:33px">6FYM.NET</div>
<div class="wm" style="left:954px;top:33px">6FYM.NET</div>
<div class="wm" style="left:1907px;top:33px">6FYM.NET</div>
<div class="wm" style="left:0px;top:541px">6FYM.NET</div>
<div class="wm" style="left:954px;top:541px">6FYM.NET</div>
<div class="wm" style="left:1907px;top:541px">6FYM.NET</div>
<div class="wm" style="left:0px;top:1051px">6FYM.NET</div>
<div class="wm" style="left:954px;top:1051px">6FYM.NET</div>
<div class="wm" style="left:1907px;top:1051px">6FYM.NET</div></body></html>
